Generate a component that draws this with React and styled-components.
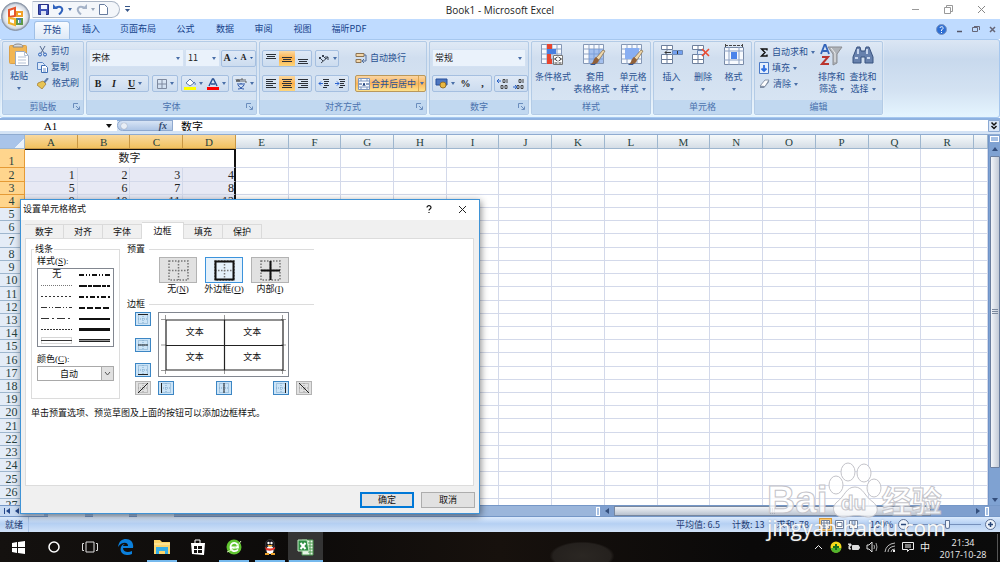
import React from 'react';
import styled, { createGlobalStyle, css } from 'styled-components';

const Global = createGlobalStyle`
  * { box-sizing: border-box; }
  body { margin: 0; overflow: hidden; font-family: "Noto Sans", "Noto Sans CJK SC", sans-serif; font-size: 9px; line-height: 12px; }
  button, input, select { font: inherit; color: inherit; margin: 0; padding: 0; border: 0; background: none; outline: none; }
  svg { display: block; flex: none; }
  fieldset { margin: 0; min-width: 0; }
`;
const cjk = '"Noto Sans CJK SC", sans-serif';
const song = '"Liberation Serif", "Noto Sans CJK SC", serif';

const Window = styled.div`position: relative; display: flex; flex-direction: column; height: 100vh; min-height: 480px; overflow: hidden; background: #fff;`;

/* title bar and ribbon tabs */
const TitleBar = styled.header`position: relative; display: grid; grid-template-columns: 1fr auto 1fr; align-items: center; height: 19px; background: #fff;`;
const TitleLeft = styled.div`display: flex; align-items: center; padding-left: 32px;`;
const QuickBar = styled.div`display: flex; align-items: center; gap: 4px; width: 88px; height: 17px; padding-left: 5px; border: 1px solid #a9b4c4; border-left-color: #dfe6ef; border-radius: 0 9px 9px 0; background: #f3f6fa;`;
const IconButton = styled.button`display: flex; align-items: center; justify-content: center;`;
const Title = styled.h1`margin: 0; font: 400 10px/14px "Open Sans", sans-serif; color: #222;`;
const WindowButtons = styled.div`display: flex; align-items: center; justify-content: flex-end; gap: 24px; padding-right: 14px;`;
const Orb = styled.button`position: absolute; left: 1px; top: 2px; z-index: 2; width: 29px; height: 29px;`;
const TabBar = styled.nav`display: flex; align-items: flex-end; height: 20px; padding-left: 34px; background: #bfdbff; font: 9px/16px ${cjk}; color: #15428b;`;
const Tab = styled.button`height: 18px; padding-bottom: 2px; width: ${p => p.$w}px; ${p => p.$on && css`border: 1px solid #9fbfe6; border-bottom: 0; border-radius: 3px 3px 0 0; background: linear-gradient(#f8fbff, #dde9f7);`}`;
const TabTools = styled.div`display: flex; align-items: center; gap: 9px; height: 20px; margin-left: auto; padding-right: 4px;`;

/* ribbon */
const Ribbon = styled.section`display: flex; gap: 2px; height: 79px; padding: 1px 2px 2px; border: 1px solid #a6c7ee; border-left: 0; border-radius: 3px; background: linear-gradient(#dbe6f4 0, #c8d9ed 25%, #d3e2f2 65%, #e5f5ff 100%); font-family: ${cjk}; color: #2a5292;`;
const GroupBox = styled.section`display: flex; flex-direction: column; width: ${p => p.$w}px; border: 1px solid #b3cbe6; border-radius: 2px; box-shadow: 0 0 0 1px #ffffff40; background: linear-gradient(#dfe9f5 0, #d0deef 22%, #d9e6f4 100%);`;
const GroupBody = styled.div`display: flex; flex: 1; min-height: 0; gap: ${p => p.$gap || 0}px; padding: ${p => p.$pad || '2px'};`;
const GroupTitle = styled.h2`display: flex; flex: none; align-items: center; justify-content: center; position: relative; height: 14px; margin: 0; font: 9px/14px ${cjk}; color: #4a72ae; background: #c1d8f0;`;
const Launcher = styled.button`position: absolute; right: 3px; top: 3px;`;
const Column = styled.div`display: flex; flex-direction: column; gap: ${p => p.$gap || 0}px;`;
const Row = styled.div`display: flex; align-items: center; gap: ${p => p.$gap || 0}px;`;
const BigButton = styled.button`display: flex; flex-direction: column; align-items: center; align-self: flex-start; width: ${p => p.$w}px; line-height: 12px; white-space: nowrap; > svg { margin-bottom: 3px; }`;
const Line = styled.span`display: flex; align-items: center; justify-content: center; gap: 3px; height: 12px;`;
const SmallButton = styled.button`display: flex; align-items: center; gap: 3px; height: 16px; white-space: nowrap;`;
const Strip = styled.div`display: flex; height: 17px; border: 1px solid #a5bfe0; border-radius: 2px; background: linear-gradient(#dfe9f6, #ccdcef); color: #222;`;
const Tool = styled.button`display: flex; align-items: center; justify-content: center; gap: 3px; width: ${p => p.$w || 16}px; font: 700 10px/14px "Liberation Serif", serif; ${p => p.$on && css`background: linear-gradient(#fcd9a0, #fbb04c 50%, #fdd57c);`}`;
const MergeButton = styled.button`display: flex; align-items: center; gap: 1px; width: 71px; height: 17px; padding-left: 2px; border: 1px solid #b9985c; border-radius: 2px; background: linear-gradient(#fbd5a2, #fbb65c 50%, #fde18a); white-space: nowrap; span { margin-left: auto; padding: 6px 1px; border-left: 1px solid #d9a552; }`;
const Divider = styled.i`width: 1px; height: 42px; background: #b5cbe5;`;
const Combo = styled.label`position: relative; width: ${p => p.$w}px; height: 18px; background: #eaf2fb; border: 1px solid #d3e1f2; select { width: 100%; height: 16px; padding-left: 2px; appearance: none; color: #222; font: 9px/16px ${cjk}; } svg { position: absolute; right: 3px; top: 7px; pointer-events: none; }`;

/* formula bar */
const FormulaBar = styled.div`display: flex; height: 17px; padding: 1px 0 3px; border-top: 1px solid #8db2e3; border-bottom: 1px solid #8fabd0; background: linear-gradient(#8fb1dd 2px, #d4e3f5 2px); font: 12px/12px ${song};`;
const NameBox = styled.label`position: relative; width: 117px; background: #fff; input { width: 100%; height: 12px; padding-right: 16px; text-align: center; font: 11px/12px ${song}; } svg { position: absolute; right: 5px; top: 4px; }`;
const FxButton = styled.button`display: flex; align-items: center; justify-content: space-between; width: 56px; padding: 0 5px 0 3px; border: 1px solid #8fa9cf; border-radius: 7px 0 0 7px; background: linear-gradient(#d7e4f5, #afc6e6); font: italic 700 10px/10px "Liberation Serif", serif; color: #334a70; i { width: 6px; height: 6px; border-radius: 50%; background: #e8eef6; box-shadow: 0 0 1px #778; }`;
const FormulaInput = styled.input`&& { flex: 1; min-width: 0; padding-left: 8px; background: #fff; font: 11px/12px ${cjk}; }`;

/* sheet */
const Sheet = styled.main`display: flex; flex: 1; min-height: 0;`;
const GridPane = styled.div`flex: 1; min-width: 0; overflow: hidden;`;
const Grid = styled.table`width: 100%; height: 102%; table-layout: fixed; border-collapse: separate; border-spacing: 0; font: 12px/12px ${song}; color: #222;`;
const Edge = styled.col`width: ${p => p.$w}px;`;
const ColHead = styled.th`height: 14px; padding: 0; border-right: 1px solid #9eb6ce; border-bottom: 1px solid #9eb6ce; font-weight: 400; font-size: 11px; line-height: 12px; color: #27413e; background: ${p => p.$on ? 'linear-gradient(#f9d99f, #f1c15f)' : 'linear-gradient(#f6fafb, #d5dde6)'}; ${p => p.$on && css`border-color: #c99844;`}`;
const Corner = styled.th`padding: 0; border-right: 1px solid #9eb6ce; border-bottom: 1px solid #9eb6ce; background: linear-gradient(135deg, transparent 75%, #e9f1fb 75%), #a9c4e9;`;
const RowHead = styled.th`height: ${p => p.$h}px; padding: 0 1px 0 0; vertical-align: bottom; border-right: 1px solid #9eb6ce; border-bottom: 1px solid #9eb6ce; font-weight: 400; line-height: 12px; color: #27413e; background: ${p => p.$on ? '#ffd58d' : '#e4ecf7'}; ${p => p.$on && css`border-color: #e59a35;`}`;
const Cell = styled.td`padding: 0 2px 0 0; border-right: 1px solid #d3d9ea; border-bottom: 1px solid #d3d9ea; text-align: right; vertical-align: bottom; ${p => p.$sel && css`background: #e7e9f4;`} ${p => p.$edge && css`border-right: 2px solid #111; padding-right: 0;`}`;
const Merged = styled.td`padding: 0; border-top: 1px solid #111; border-right: 2px solid #111; border-bottom: 1px solid #d3d9ea; text-align: center; vertical-align: top; font: 11px/15px ${cjk};`;
const VBar = styled.div`display: flex; flex-direction: column; align-items: center; gap: 5px; width: 12px; padding: 1px 0 3px; border-left: 1px solid #6f93c8; background: #7fa2d2;`;
const SplitV = styled.i`width: 9px; height: 6px; border: 1px solid #fff; background: #a5c0e4;`;
const VThumb = styled.div`display: flex; align-items: center; justify-content: center; width: 10px; flex: 1; margin-bottom: 25px; border: 1px solid #6b7f9f; border-radius: 1px; background: linear-gradient(90deg, #f3f6fa, #c2cad6);`;
const SheetBar = styled.div`display: flex; align-items: center; height: 12px; border-top: 1px solid #7597c7; border-bottom: 1px solid #7597c7; background: #9bb6db;`;
const NavButtons = styled.div`display: flex; align-items: center; gap: 5px; height: 10px; width: 44px; padding-left: 4px; background: #c7daf3;`;
const SheetTabs = styled.div`display: flex; flex: 1; gap: 8px; padding-left: 4px; font: 9px/12px "Liberation Sans", sans-serif; color: #333; button { background: #c9dbf1; padding: 0 4px; }`;
const HBar = styled.div`display: flex; align-items: center; gap: 5px; width: 40%; height: 10px; background: #7f9fce;`;
const SplitH = styled.i`width: 4px; height: 9px; border: 1px solid #fff; background: #a9c3e5;`;
const HThumb = styled.div`display: flex; align-items: center; justify-content: center; flex: 1; height: 10px; margin-right: 40px; border: 1px solid #77879f; background: linear-gradient(#f0f3f7, #b9c2cf);`;
const StatusBar = styled.footer`display: flex; align-items: center; height: 15px; padding: 0 4px 0 5px; background: linear-gradient(#dceafc, #b5d0f3 45%, #d1e2f8); font: 9px/15px ${cjk}; color: #1e3c73;`;
const Mode = styled.span`width: 24px; border-right: 1px solid #a7c3e8;`;
const Stats = styled.div`display: flex; gap: 12px; margin-left: auto; white-space: nowrap;`;
const Views = styled.div`display: flex; gap: 1px; margin-left: 10px;`;
const ViewButton = styled.button`&& { display: flex; align-items: center; justify-content: center; width: 13px; height: 13px; ${p => p.$on && css`background: #fbc86f; box-shadow: inset 0 0 0 1px #d79b3d;`} }`;
const Zoom = styled.div`display: flex; align-items: center; gap: 4px; margin-left: 10px; span { width: 24px; }`;
const ZoomSlider = styled.input`&& { appearance: none; width: 68px; height: 9px; background: linear-gradient(#7690bb, #7690bb) center / 100% 1px no-repeat; } &::-webkit-slider-thumb { appearance: none; width: 5px; height: 9px; border: 1px solid #5c7195; border-radius: 1px 1px 3px 3px; background: #eef3fa; }`;

/* taskbar */
const Taskbar = styled.footer`display: flex; height: 30px; background: radial-gradient(36px 16px at 582px 24px, #2b2723 0, #25211e 80%, transparent 90%), linear-gradient(90deg, #14110f, #0d0b0a 30%, #17110d 50%, #0a0909 75%, #0b0b0b); color: #eee;`;
const Task = styled.button`&& { display: flex; align-items: center; justify-content: center; width: ${p => p.$w || 36}px; height: 30px; ${p => p.$open && css`background: linear-gradient(#76b9ed, #76b9ed) center bottom / 30px 2px no-repeat;`} ${p => p.$on && css`background: linear-gradient(#76b9ed, #76b9ed) center bottom / 34px 2px no-repeat, #343434;`} }`;
const Tray = styled.div`display: flex; align-items: center; gap: 6px; margin-left: auto; padding-right: 2px; font: 10px/12px ${cjk};`;
const Clock = styled.time`width: 62px; padding: 3px 7px 0 0; text-align: center; white-space: nowrap; font: 9px/12px "Open Sans", sans-serif; border-right: 1px solid #555;`;

/* dialog */
const Dialog = styled.section`position: absolute; left: 20px; top: 199px; z-index: 3; width: 460px; height: 315px; display: flex; flex-direction: column; border: 1px solid #3f93d6; background: #f0f0f0; box-shadow: 1px 2px 7px #0007; font: 9px/12px "Liberation Serif", ${cjk}; color: #111;`;
const DialogTitle = styled.header`display: flex; align-items: center; height: 20px; padding: 0 12px 2px 2px; background: #fff; font-family: ${cjk}; h2 { flex: 1; margin: 0; font: inherit; } button + button { margin-left: 25px; }`;
const DialogTabs = styled.div`display: flex; align-items: flex-end; height: 17px; margin-top: 1px; padding-left: 4px;`;
const DialogTab = styled.button`position: relative; width: 39px; height: 14px; border: 1px solid #dadada; border-left: 0; border-bottom: 0; background: #f0f0f0; ${p => p.$on && css`z-index: 1; width: 42px; height: 17px; margin-bottom: -1px; background: #fff;`}`;
const Panel = styled.div`flex: 1; margin: 0 5px 0 4px; padding: 4px 5px; border: 1px solid #dcdcdc; background: #fff;`;
const Columns = styled.div`display: flex; gap: 7px;`;
const LineBox = styled.fieldset`display: flex; flex-direction: column; width: 89px; height: 156px; padding: 0 5px; border: 1px solid #dcdcdc; legend { padding: 0 1px; margin-left: -3px; line-height: 12px; }`;
const StyleList = styled.div`display: grid; grid-template-columns: 1fr 1fr; grid-auto-rows: 11px; height: 79px; margin: 1px 0 6px; border: 1px solid #828790; button { display: flex; align-items: center; justify-content: center; height: 11px; line-height: 11px; }`;
const ColorSelect = styled.label`position: relative; display: block; margin-top: 1px; select { width: 77px; height: 15px; border: 1px solid #a9a9a9; appearance: none; padding-left: 22px; font: 9px/13px ${cjk}; } svg { position: absolute; right: 0; top: 0; pointer-events: none; }`;
const Right = styled.div`width: 187px;`;
const Heading = styled.h3`display: flex; align-items: center; gap: 4px; margin: 0; font: inherit; line-height: 12px; &::after { content: ''; flex: 1; height: 1px; background: #dcdcdc; }`;
const Presets = styled.div`display: flex; gap: 8px; padding: 2px 0 0 32px; margin-bottom: 2px;`;
const Preset = styled.div`display: flex; flex-direction: column; align-items: center; width: 38px; white-space: nowrap; button { display: flex; align-items: center; justify-content: center; width: 38px; height: 26px; border: 1px solid ${p => p.$on ? '#3c93dc' : '#b3b3b3'}; background: ${p => p.$on ? '#e5f1fb' : '#e1e1e1'}; } label { line-height: 13px; }`;
const BorderGrid = styled.div`display: grid; grid-template-columns: 16px 131px 16px; gap: 4px 7px; padding: 2px 0 0 8px;`;
const Side = styled.div`display: flex; flex-direction: ${p => p.$col ? 'column' : 'row'}; justify-content: space-between;`;
const EdgeButton = styled.button`&& { display: flex; align-items: center; justify-content: center; width: 16px; height: 14px; border: 1px solid ${p => p.$off ? '#b3b3b3' : '#3c86c4'}; background: ${p => p.$off ? '#e1e1e1' : '#cce4f7'}; }`;
const Preview = styled.div`position: relative; height: 65px; border: 1px solid #828790;`;
const PreviewText = styled.div`position: absolute; inset: 7px 7px; display: grid; grid-template: 1fr 1fr / 1fr 1fr; place-items: center;`;
const Hint = styled.p`margin: 8px 0 0; font-size: 9px; line-height: 12px;`;
const DialogButtons = styled.div`display: flex; justify-content: flex-end; gap: 7px; padding: 6px 4px 5px;`;
const PushButton = styled.button`&& { width: 54px; height: 16px; line-height: 12px; background: #e1e1e1; border: ${p => p.$main ? '2px solid #0078d7' : '1px solid #adadad'}; }`;

/* watermark */
const Watermark = styled.div`position: absolute; right: 54px; bottom: 22px; z-index: 4; width: 179px; pointer-events: none; color: #ffffffd0;`;
const Brand = styled.div`display: flex; align-items: flex-end; font: 700 39px/39px "Liberation Sans", sans-serif; -webkit-text-stroke: 1px #c3c3c9; span { white-space: nowrap; } span:last-child { font: 700 30px/40px ${cjk}; }`;
const Paw = styled.div`position: relative; width: 54px; height: 58px; b { position: absolute; left: 13px; bottom: 5px; font: 700 21px/22px "Liberation Sans", sans-serif; }`;
const Site = styled.div`font: 21px/24px "Open Sans", sans-serif; margin-top: -3px; white-space: nowrap; color: #fffffff0; text-shadow: 0 0 2px #8889;`;

/* drawings */
const Svg = ({ w = 12, h = w, vb, children, ...r }) => <svg width={w} height={h} viewBox={vb || `0 0 ${w} ${h}`} fill="none" aria-hidden="true" {...r}>{children}</svg>;
const Caret = ({ c = '#4a6fa8' }) => <Svg w={4} h={3}><path d="M0 0h4L2 3z" fill={c} /></Svg>;
const Lines = ({ v, a }) => {
  const x = i => a === 'l' ? 1 : a === 'r' ? (i % 2 ? 4 : 1) : (i % 2 ? 2 : 1);
  const n = v ? 3 : 5, y0 = v === 't' ? 1 : v === 'b' ? 6 : v ? 4 : 1;
  return <Svg w={12}>{Array.from({ length: n }, (_, i) => <path key={i} d={`M${x(i)} ${y0 + i * 2 + .5}h${i % 2 ? (a === 'c' || v ? 8 : 7) : 10}`} stroke="#2b3038" />)}</Svg>;
};
const Indent = ({ out }) => <Svg w={12}><path d="M5 1.5h6M6 3.5h5M6 5.5h4M6 7.5h5M5 9.5h4" stroke="#2b3038" /><path d={out ? 'M5 5.5H1m2-2-2 2 2 2' : 'M1 5.5h4m-2-2 2 2-2 2'} stroke="#2a62cf" /></Svg>;
const Launch = () => <Launcher aria-label="对话框启动器"><Svg w={7}><path d="M.5 5V.5H5M3 3l3 3M6.5 3.5v3h-3" stroke="#6a8dbd" /></Svg></Launcher>;
const MiniSheet = () => <><path d="M.5.5h20v19H.5z" fill="#f7fafe" stroke="#8497b5" /><path d="M.5 5h20M.5 10h20M.5 15h20M6 0v20M11 0v20M16 0v20" stroke="#8fa3c4" /></>;
const Brush = () => <><path d="m20 6 2 1-6 9-3-2z" fill="#f0d8ac" stroke="#846a45" strokeWidth=".7" /><path d="m13 13 3 3c-1 4-4 5-8 4 3-2 2-5 5-7z" fill="#916038" /><path d="M8 20c2 0 4 0 5-1l-1 2H7z" fill="#31589a" /></>;
const CondIcon = () => <Svg w={24}><MiniSheet /><path d="M6 0h5v5H6zM6 15h5v5H6zM6 10h4v5H6z" fill="#e8452f" /><path d="M6 5h9v5H6z" fill="#487ee0" /><path d="M12.5 11.5h9v9h-9z" fill="#fff" stroke="#777" /><path d="m16.500 13-3 2 3 2m-3 2h3m1-6 3 2-3 2m0 2h3" stroke="#222" strokeWidth=".9" /></Svg>;
const TableIcon = ({ cell }) => <Svg w={24}><MiniSheet />{cell ? <path d="M4 4h14v11H4z" fill="#88aef2" /> : <path d="M6 5h14v14H6z" fill="#6d99e2" opacity=".6" />}<Brush /></Svg>;
const CellsIcon = ({ kind }) => <Svg w={24}>{kind === 'fmt' ? <><path d="M2.500 3.500h19v17h-19z" fill="#f7fafe" stroke="#788aa7" /><path d="M2 7h20M2 16h20M7 3v18M17 3v18" stroke="#8fa3c4" /><path d="M9 8h6v7H9z" fill="#4c84ea" /><path d="M3 1.500h18M3.500 0v3M20.500 0v3" stroke="#444" strokeDasharray="3 1" /></> : <><path d="M1.500 1.500h11v4h-11zM1.500 10.500h11v5h-11zM1.500 15.500h11v4h-11zM7 1v5M7 11v9" fill="#fff" stroke="#6d7f9c" /><path d={kind === 'ins' ? 'M12.500 6.500h10v4h-10z' : 'M6.500 6.500h7v4h-7z'} fill={kind === 'ins' ? '#73a0ef' : '#dfe8f8'} stroke="#6d8ab8" />{kind === 'ins' ? <path d="M5 8.500h6M7 6.500l-2 2 2 2M17.500 7v3" stroke="#333" /> : <path d="m11 5 7 7m0-7-7 7" stroke="#ed4b30" strokeWidth="1.600" />}</>}</Svg>;
const PasteIcon = () => <Svg w={22} h={24}><rect x="1.500" y="2.500" width="17" height="18" rx="1" fill="#f2b653" stroke="#dba14a" /><path d="M5 4c0-2 2-3 5-3s5 1 5 3z" fill="#d9dbe0" stroke="#888" /><path d="M7.500 8.500h9l4 4v10h-13z" fill="#fff" stroke="#9aa9c0" /><path d="M16.500 8.500v4h4M10 14h8M10 17h8M10 20h8" stroke="#b3c0d4" /></Svg>;
const SortIcon = () => <Svg w={24}><path d="M1 10 4.500 1h1L9 10M3 7h4" stroke="#3264ba" strokeWidth="1.800" /><path d="M2 13h6l-6 7h7" stroke="#ba352f" strokeWidth="2" /><path d="M8 3h14l-5 7v9l-4 2V10z" fill="#aeb3b9" stroke="#8b8d91" /><path d="m11 4 4 5v9" stroke="#eee" /></Svg>;
const FindIcon = () => <Svg w={24}><path d="M6 3h3l1 4h4l1-4h3l4 10v6h-8v-6h-4v6H2v-6z" fill="#6781ad" stroke="#39527f" /><path d="M4 14h3M16 14h3M7 5v5M16 5v5" stroke="#c8d6ed" strokeWidth="2" /></Svg>;
const Glyph = {
  cut: <Svg w={11}><path d="m3 0 4 7m1-7L4 7" stroke="#566b90" /><circle cx="3" cy="8.500" r="1.500" stroke="#2d62b8" /><circle cx="8" cy="8.500" r="1.500" stroke="#2d62b8" /></Svg>,
  copy: <Svg w={11}><path d="M.5.5h5l2 2v5h-7z" fill="#dce9fa" stroke="#5c86c3" /><path d="M4.500 3.500h4l2 2v5h-6z" fill="#fff" stroke="#3e6eb4" /><path d="M6 7h3M6 9h3" stroke="#6c94cf" /></Svg>,
  brush: <Svg w={12} h={11}><path d="m11 0-5 6" stroke="#617da8" strokeWidth="2" /><path d="M1 5 6 3l3 3-4 5-5-4z" fill="#e7c454" stroke="#9b742c" strokeWidth=".7" /></Svg>,
  sum: <Svg w={10} h={11}><path d="M8 3.500V2H2.500L6 5.500 2.500 9H8V7.500" stroke="#111" strokeWidth="1.400" /></Svg>,
  fill: <Svg w={10} h={12}><path d="M.5.5h9v11h-9z" fill="#e5effd" stroke="#4b79c5" /><path d="M5 3v6M2.500 6.500 5 9l2.500-2.500" stroke="#2e6ee0" strokeWidth="1.800" /></Svg>,
  erase: <Svg w={11} h={10}><path d="m1 7 5-6h4L6 7.500z" fill="#fff" stroke="#8a96a8" /><path d="M1 7v2h4l5-6V1L6 7.500z" fill="#7f8ea5" /></Svg>,
  save: <Svg w={11}><path d="M.5.5h10v10H.5z" fill="#3e52b6" stroke="#252f86" /><path d="M3 1h6v4H3z" fill="#f2f6ff" /><path d="M3 7h5v4H3z" fill="#dbe1f4" /></Svg>,
};
const Undo = () => <Svg w={11}><path d="M3 3.500c5-2 8 1 5 5l-2 2" stroke="#3163bd" strokeWidth="2" /><path d="M0 4V0l5 5H0z" fill="#3163bd" /></Svg>;
const Redo = () => <Svg w={11}><path d="M8 3.500c-5-2-8 1-5 5l2 2" stroke="#a5b3c8" strokeWidth="2" /><path d="M11 4V0L6 5h5z" fill="#a5b3c8" /></Svg>;
const edgeLine = { t: 'M0 .5h10', m: 'M0 5h10', b: 'M0 9.500h10', l: 'M.5 0v10', c: 'M5 0v10', r: 'M9.500 0v10', u: 'm0 10 10-10', d: 'm0 0 10 10' };
const Mini = ({ kind }) => <Svg w={10}><path d="M.5.5h9v9h-9zM5 0v10M0 5h10" stroke={kind === 'u' || kind === 'd' ? '#999' : '#7ba6c9'} strokeDasharray="1 1" /><path d={edgeLine[kind]} stroke="#222" /></Svg>;
const PresetIcon = ({ kind }) => <Svg w={21}><path d="M1 1h19v19H1zM10.500 1v19M1 10.500h19" stroke="#777" strokeWidth="1.500" strokeDasharray="1.500 1.500" />{kind === 'out' && <path d="M1.500 1.500h18v18h-18z" stroke="#111" strokeWidth="2" />}{kind === 'in' && <path d="M10.500 1v19M1 10.500h19" stroke="#111" strokeWidth="2" />}</Svg>;
const dashes = [[null, '5 2 1 2 1 2', 2], ['1 1', '8 1 4 1', 2], ['2 2', '5 2 2 2', 2], ['6 2 1 2 1 2', '6 2', 2], ['8 3 2 3', '', 2], ['2 1', '', 3], ['', 'double', 3]];

const Group = ({ w, title, gap, pad, launch, children }) => <GroupBox $w={w}><GroupBody $gap={gap} $pad={pad}>{children}</GroupBody><GroupTitle>{title}{launch && <Launch />}</GroupTitle></GroupBox>;
const Big = ({ w, icon, a, b }) => <BigButton $w={w}>{icon}<Line>{a}</Line><Line>{b}<Caret /></Line></BigButton>;
const Select = ({ w, label, value }) => <Combo $w={w}><select aria-label={label}><option>{value}</option></select><Caret /></Combo>;

const cols = 'ABCDEFGHIJKLMNOPQR'.split('');
const rows = Array.from({ length: 26 }, (_, i) => i + 2);

export default function App() {
  return <Window>
    <Global />
    <TitleBar>
      <Orb aria-label="Office 按钮"><Svg w={29}><defs><radialGradient id="orb"><stop offset=".5" stopColor="#fff" /><stop offset=".85" stopColor="#d5dbe4" /><stop offset="1" stopColor="#8792a4" /></radialGradient></defs><circle cx="14.500" cy="14.500" r="14" fill="url(#orb)" stroke="#8c97a8" /><path d="m8 8 6-2v8l-6 1z" stroke="#e6552b" strokeWidth="2" /><path d="M16 10h5v4h-5z" stroke="#f1a028" strokeWidth="2" /><path d="m8 16 6 1v6l-6-2z" stroke="#f0b02c" strokeWidth="2" /><path d="M16 17h5v5h-5z" stroke="#5f9a4a" strokeWidth="2" /><path d="M16 17h3v4" stroke="#3c76cd" strokeWidth="1.500" /></Svg></Orb>
      <TitleLeft>
        <QuickBar><IconButton aria-label="保存">{Glyph.save}</IconButton><IconButton aria-label="撤消"><Undo /></IconButton><Caret /><IconButton aria-label="恢复"><Redo /></IconButton><Caret c="#98a6ba" /><IconButton aria-label="新建"><Svg w={9} h={11}><path d="M.5.5h5l3 3v7h-8z" fill="#fff" stroke="#677c9f" /></Svg></IconButton></QuickBar>
        <IconButton aria-label="自定义"><Svg w={16} h={7}><path d="M5 .5h5" stroke="#345487" /><path d="M5 3h5L7.500 6z" fill="#345487" /></Svg></IconButton>
      </TitleLeft>
      <Title>Book1 - Microsoft Excel</Title>
      <WindowButtons><IconButton aria-label="最小化"><Svg w={9}><path d="M1 4.500h7" stroke="#999" /></Svg></IconButton><IconButton aria-label="还原"><Svg w={9}><path d="M.5 2.500h6v6h-6zM2.500 2V.5h6v6H7" stroke="#999" /></Svg></IconButton><IconButton aria-label="关闭"><Svg w={9}><path d="m1 1 7 7m0-7L1 8" stroke="#888" /></Svg></IconButton></WindowButtons>
    </TitleBar>
    <TabBar>
      <Tab $on $w={36}>开始</Tab><Tab $w={42}>插入</Tab><Tab $w={52}>页面布局</Tab><Tab $w={43}>公式</Tab><Tab $w={36}>数据</Tab><Tab $w={41}>审阅</Tab><Tab $w={37}>视图</Tab><Tab $w={56}>福昕PDF</Tab>
      <TabTools><IconButton aria-label="帮助"><Svg w={11}><circle cx="5.500" cy="5.500" r="5" fill="#2e6fd4" stroke="#7b95c0" /><path d="M4 4c0-2 4-1.500 3 .5L5.500 6v1M5.500 8v1" stroke="#fff" /></Svg></IconButton><IconButton aria-label="最小化窗口"><Svg w={7}><path d="M1 5.500h5" stroke="#556" strokeWidth="1.500" /></Svg></IconButton><IconButton aria-label="还原窗口"><Svg w={8}><path d="M.5 2.500h5v4h-5zM2 1.500h5.500V5" stroke="#667" /></Svg></IconButton><IconButton aria-label="关闭窗口"><Svg w={7}><path d="m1 1 5 5m0-5L1 6" stroke="#667" strokeWidth="1.500" /></Svg></IconButton></TabTools>
    </TabBar>
    <Ribbon>
      <Group w={82} title="剪贴板" launch gap={6} pad="1px 4px">
        <Big w={26} icon={<PasteIcon />} a="粘贴" />
        <Column>{[['cut', '剪切'], ['copy', '复制'], ['brush', '格式刷']].map(([i, t]) => <SmallButton key={i}>{Glyph[i]}{t}</SmallButton>)}</Column>
      </Group>
      <Group w={171} title="字体" launch pad="7px 2px 0">
        <Column $gap={8}>
          <Row $gap={1}><Select w={95} label="字体" value="宋体" /><Select w={35} label="字号" value="11" /><Strip><Tool>A<Svg w={3}><path d="m0 2 1.500-2L3 2z" fill="#25569f" /></Svg></Tool><Tool $w={17}><small>A</small><Svg w={3}><path d="m0 0 1.500 2L3 0z" fill="#25569f" /></Svg></Tool></Strip></Row>
          <Row $gap={3}><Strip><Tool>B</Tool><Tool><i>I</i></Tool><Tool $w={26}><u>U</u><Caret /></Tool></Strip><Strip><Tool $w={24}><Svg w={10}><path d="M.5.500h9v9h-9zM5 0v10M0 5h10" stroke="#7e8aa0" /></Svg><Caret /></Tool></Strip><Strip><Tool $w={23}><Svg w={12}><path d="m2 5 4-4 4 4-4 3z" fill="#fff" stroke="#607da9" /><path d="M10 4c2 1 1 3 1 3" stroke="#4f76b7" /><path d="M0 9h12v3H0z" fill="#ff0" /></Svg><Caret /></Tool><Tool $w={23}><Svg w={12}><path d="m2 8 3.500-7h1L10 8M4 6h4" stroke="#2b5293" strokeWidth="1.500" /><path d="M0 9h12v3H0z" fill="#f00" /></Svg><Caret /></Tool></Strip><Strip><Tool $w={23}><Svg w={12}><path d="M1 1l1 3 1-3 1 3 1-3M6 4V1h2v3M10 1v3h2" stroke="#444" strokeWidth=".8" /><path d="M2 6h8M6 5v1M3 7c2 3 4 4 6 4M9 7c-2 3-4 4-6 4" stroke="#2852a6" /></Svg><Caret /></Tool></Strip></Row>
        </Column>
      </Group>
      <Group w={168} title="对齐方式" launch gap={3} pad="8px 1px 0 2px">
        <Column $gap={8}>
          <Row $gap={3}><Strip><Tool><Lines v="t" /></Tool><Tool $on><Lines v="m" /></Tool><Tool><Lines v="b" /></Tool></Strip><Strip><Tool $w={22}><Svg w={12}><path d="m3 10 7-6m0 3V4H7M1 4l4 4M4 2l4 4M1 6l2-2m1 0 2-2" stroke="#3b4350" /></Svg><Caret /></Tool></Strip></Row>
          <Row $gap={3}><Strip><Tool><Lines a="l" /></Tool><Tool $on><Lines a="c" /></Tool><Tool><Lines a="r" /></Tool></Strip><Strip><Tool><Indent out /></Tool><Tool><Indent /></Tool></Strip></Row>
        </Column>
        <Divider />
        <Column $gap={9}><SmallButton><Svg w={12}><path d="M1 1.500h8v3H1zM1 7.500h5v3H1z" fill="#f3d7aa" stroke="#8c7352" /><path d="M9 3h2v6H7m2-2L7 9l2 2" stroke="#526f9d" /></Svg>自动换行</SmallButton>
          <MergeButton><Svg w={12}><path d="M.5.5h11v11H.5zM0 3h12M0 9h12M3 0v3M9 0v3M3 9v3M9 9v3" fill="#f8fbff" stroke="#7f97bf" /><path d="M1 6h3M8 6h3M5 8l1-3 1 3" stroke="#224480" /></Svg>合并后居中<span><Caret /></span></MergeButton></Column>
      </Group>
      <Group w={100} title="数字" launch pad="7px 2px 0">
        <Column $gap={8}><Select w={94} label="数字格式" value="常规" />
          <Row $gap={2}><Strip><Tool $w={24}><Svg w={13}><path d="M1 2h11v6H1z" fill="#4d76bf" stroke="#274f9b" /><ellipse cx="8" cy="8" rx="3" ry="3" fill="#e9b740" stroke="#96712a" /></Svg><Caret /></Tool><Tool $w={17}>%</Tool><Tool $w={17}>,</Tool></Strip><Strip>{[0, 1].map(i => <Tool key={i}><Svg w={12}><path d="M6 1.500h2v3H6zM10 1v4M4 7.500h2v3H4zM8 7.500h2v3H8z" stroke="#444" /><path d={i ? 'M0 9h4M2 7l2 2-2 2' : 'M4 3H0m2-2L0 3l2 2'} stroke="#2960c4" /></Svg></Tool>)}</Strip></Row></Column>
      </Group>
      <Group w={120} title="样式" pad="2px 1px"><Big w={40} icon={<CondIcon />} a="条件格式" /><Big w={44} icon={<TableIcon />} a="套用" b="表格格式" /><Big w={32} icon={<TableIcon cell />} a="单元格" b="样式" /></Group>
      <Group w={99} title="单元格" pad="2px 1px"><Big w={33} icon={<CellsIcon kind="ins" />} a="插入" /><Big w={30} icon={<CellsIcon kind="del" />} a="删除" /><Big w={31} icon={<CellsIcon kind="fmt" />} a="格式" /></Group>
      <Group w={129} title="编辑" gap={1} pad="2px 4px">
        <Column>{[['sum', '自动求和'], ['fill', '填充'], ['erase', '清除']].map(([i, t]) => <SmallButton key={i}>{Glyph[i]}{t}<Caret /></SmallButton>)}</Column>
        <Big w={31} icon={<SortIcon />} a="排序和" b="筛选" /><Big w={30} icon={<FindIcon />} a="查找和" b="选择" />
      </Group>
    </Ribbon>
    <FormulaBar>
      <NameBox><input aria-label="名称框" defaultValue="A1" /><Svg w={6} h={4}><path d="M0 0h6L3 4z" fill="#111" /></Svg></NameBox>
      <FxButton aria-label="插入函数"><i />fx</FxButton><FormulaInput aria-label="编辑栏" defaultValue="数字" />
      <IconButton aria-label="展开编辑栏"><Svg w={12}><path d="M.5.5h11v11H.500z" fill="#d9e6f7" stroke="#8ba9d3" /><path d="m3.500 2.500 2.500 2.500 2.500-2.500M3.500 6l2.500 2.500L8.500 6" stroke="#111" strokeWidth="1.500" /></Svg></IconButton>
    </FormulaBar>
    <Sheet>
      <GridPane><Grid>
        <colgroup><Edge $w={25} />{cols.map(c => <col key={c} />)}<Edge $w={14} /></colgroup>
        <thead><tr><Corner />{cols.map((c, i) => <ColHead key={c} $on={i < 4}>{c}</ColHead>)}<ColHead /></tr></thead>
        <tbody>
          <tr><RowHead $h={19} $on>1</RowHead><Merged colSpan={4}>数字</Merged>{cols.slice(4).map(c => <Cell key={c} />)}<Cell /></tr>
          {rows.map(r => <tr key={r}><RowHead $h={13} $on={r < 5}>{r}</RowHead>{cols.map((c, i) => <Cell key={c} $sel={r < 5 && i < 4} $edge={r < 5 && i === 3}>{r < 5 && i < 4 ? (r - 2) * 4 + i + 1 : null}</Cell>)}<Cell /></tr>)}
        </tbody>
      </Grid></GridPane>
      <VBar><SplitV /><Svg w={6} h={4}><path d="m0 4 3-4 3 4z" fill="#334e7c" /></Svg><VThumb><Svg w={6}><path d="M0 .5h6M0 2.500h6M0 4.500h6" stroke="#7b899e" /></Svg></VThumb><Svg w={6} h={4}><path d="m0 0 3 4 3-4z" fill="#334e7c" /></Svg></VBar>
    </Sheet>
    <SheetBar>
      <NavButtons><Svg w={6}><path d="M.5 0v6" stroke="#24478a" /><path d="M6 0v6L2 3z" fill="#24478a" /></Svg><Svg w={4} h={6}><path d="M4 0v6L0 3z" fill="#24478a" /></Svg></NavButtons>
      <SheetTabs><button>Sheet1</button><button>Sheet2</button><button>Sheet3</button></SheetTabs>
      <SplitH /><HBar><Svg w={9} h={6}><path d="M9 0v6L5 3z" fill="#334e7c" /></Svg><HThumb><Svg w={6}><path d="M.5 0v6M2.500 0v6M4.500 0v6" stroke="#7b899e" /></Svg></HThumb><Svg w={4} h={6}><path d="M0 0v6l4-3z" fill="#334e7c" /></Svg><SplitH /><Svg w={6} /></HBar>
    </SheetBar>
    <StatusBar><Mode>就绪</Mode><Stats><span>平均值: 6.5</span><span>计数: 13</span><span>求和: 78</span></Stats>
      <Views>{['普通', '页面布局', '分页预览'].map((v, i) => <ViewButton key={v} aria-label={v} $on={i === 0}><Svg w={9}><path d={i === 1 ? 'M.5.5h8v8h-8zM2 2.500h5v4H2z' : i ? 'M.5.5h8v8h-8zM3 0v5h3V0' : 'M.5.5h8v8h-8zM0 3h9M0 6h9M3 0v9M6 0v9'} stroke="#71809a" fill="#fff" /></Svg></ViewButton>)}</Views>
      <Zoom><span>100%</span><IconButton aria-label="缩小"><Svg w={11}><circle cx="5.500" cy="5.500" r="5" fill="#edf3fb" stroke="#5c7195" /><path d="M3 5.500h5" stroke="#294779" strokeWidth="1.500" /></Svg></IconButton><ZoomSlider type="range" aria-label="显示比例" min="0" max="100" defaultValue="50" /><IconButton aria-label="放大"><Svg w={11}><circle cx="5.500" cy="5.500" r="5" fill="#edf3fb" stroke="#5c7195" /><path d="M3 5.500h5M5.500 3v5" stroke="#294779" strokeWidth="1.500" /></Svg></IconButton></Zoom>
    </StatusBar>
    <Taskbar>
      <Task aria-label="开始菜单"><Svg w={13}><path d="m0 2 5-1v5H0zM6 1l7-1v6H6zM0 7h5v5l-5-1zM6 7h7v6l-7-1z" fill="#fff" /></Svg></Task>
      <Task aria-label="Cortana"><Svg w={12}><circle cx="6" cy="6" r="5" stroke="#fff" strokeWidth="1.500" /></Svg></Task>
      <Task aria-label="任务视图"><Svg w={16} h={12}><path d="M4 1h8v10H4zM2 2.500H.5v7H2M14 2.500h1.500v7H14" stroke="#ddd" /></Svg></Task>
      <Task aria-label="Edge"><Svg w={16}><path d="M0 8C1 2 4 0 8 0c5 0 8 4 7 9H5c0 4 5 5 9 3v3C7 18 1 14 3 8c1-2 2-3 4-3-1 1-2 1-2 2h5c0-5-7-4-10 1z" fill="#0b80dd" /></Svg></Task>
      <Task $open aria-label="资源管理器"><Svg w={16} h={15}><path d="M0 0h6l2 2h8v12H0z" fill="#fbd56b" /><path d="M2 7h12v7h-3v-3H5v3H2z" fill="#34aee8" /><path d="M0 4h16" stroke="#fff0b5" /></Svg></Task>
      <Task aria-label="应用商店"><Svg w={16} h={17}><path d="M1 4h14l-1 12-12-1z" fill="#fff" /><path d="M5 4V1h5v3" stroke="#fff" /><path d="M4 7h3v3H4zM8 7h4v3H8zM4 11h3v3H4zM8 11h4v3H8z" fill="#151311" /></Svg></Task>
      <Task $open aria-label="浏览器"><Svg w={16}><circle cx="8" cy="8" r="7.500" fill="#61c431" /><path d="M4.500 8.500H12c.5-6-7.500-6-7.500-.5 0 5 5.500 5 7.500 2.500" stroke="#fff" strokeWidth="1.800" /><path d="M1 13C7 11 12 7 15 2" stroke="#d6f4b8" /></Svg></Task>
      <Task $open aria-label="QQ"><Svg w={14} h={16}><ellipse cx="7" cy="9" rx="5.500" ry="6" fill="#222" /><circle cx="7" cy="5" r="4.500" fill="#15151c" stroke="#555" strokeWidth=".5" /><ellipse cx="7" cy="11" rx="3.500" ry="4" fill="#fff" /><circle cx="5.500" cy="4" r="1.200" fill="#fff" /><circle cx="8.500" cy="4" r="1.200" fill="#fff" /><path d="M4 6h6l-3 2z" fill="#f6aa25" /><path d="M2 8q5 3 10 0v2q-4 3-9 1z" fill="#e5332a" /><path d="M2 14h4v2H2zM8 14h4v2H8z" fill="#efa42c" /></Svg></Task>
      <Task $on $w={35} aria-label="Excel"><Svg w={17}><path d="M5 1h11v15H5z" fill="#e8f4e7" stroke="#4c9b51" /><path d="M11 4h5M11 7h5M11 10h5M11 13h5M13 1v15" stroke="#4c9b51" /><path d="M1 1h9l2 11H1z" fill="#2f8e43" stroke="#c5e7c5" /><path d="m3.500 4 5 6m0-6-5 6" stroke="#fff" strokeWidth="2" /></Svg></Task>
      <Tray>
        <Svg w={11}><path d="m2 7 3.500-3.500L9 7" stroke="#eee" /></Svg><Svg w={12}><circle cx="6" cy="6" r="5.500" fill="#f4d91a" /><path d="M1 7a5 5 0 0 0 10 0" fill="#51b52d" /><path d="M6 3v6M3 6h6" stroke="#176d1d" strokeWidth="2" /></Svg><Svg w={12} h={9}><path d="M4.500 2.500h6v4h-6zM11 4h1v2M0 1h3v2H1v3h2" fill="#ddd" stroke="#ddd" /></Svg><Svg w={12}><path d="M1 4h2l3-3v10L3 8H1z" stroke="#ddd" /><path d="M8 4q1 2 0 4M10 2q2 4 0 8" stroke="#aaa" /></Svg><Svg w={12}><path d="M1 11Q2 3 11 2M4 11q0-5 7-6M7 11q0-3 4-3" stroke="#bbb" /><path d="M9 9h2v2H9z" fill="#eee" /></Svg><Svg w={12}><path d="M.5 1.500h11v7h-4l-2 2v-2h-5zM3 4h6M3 6h6" stroke="#eee" /></Svg><span>中</span><Clock>21:34<br />2017-10-28</Clock>
      </Tray>
    </Taskbar>
    <Dialog role="dialog" aria-label="设置单元格格式">
      <DialogTitle><h2>设置单元格格式</h2><IconButton aria-label="帮助"><Svg w={8}><path d="M2 2.500C2 0 6 0 6 2.500 6 4 4 4 4 5.500M4 7v1" stroke="#111" strokeWidth="1.200" /></Svg></IconButton><IconButton aria-label="关闭"><Svg w={9}><path d="m1 1 7 7m0-7L1 8" stroke="#222" /></Svg></IconButton></DialogTitle>
      <DialogTabs role="tablist">{['数字', '对齐', '字体', '边框', '填充', '保护'].map((t, i) => <DialogTab key={t} role="tab" aria-selected={i === 3} $on={i === 3}>{t}</DialogTab>)}</DialogTabs>
      <Panel>
        <Columns>
          <LineBox><legend>线条</legend><span>样式(<u>S</u>):</span>
            <StyleList>{dashes.map(([l, r, w], i) => <React.Fragment key={i}><button aria-label={`线型 ${i + 1}`}>{l === null ? '无' : <Svg w={31} h={7}>{i === 6 && <path d="M.5.5h30v6H.5z" stroke="#aaa" strokeDasharray="1 1" />}<path d="M0 3.500h31" stroke={i === 1 ? '#777' : '#333'} strokeDasharray={l} /></Svg>}</button><button aria-label={`线型 ${i + 8}`}><Svg w={31} h={5}>{r === 'double' ? <><path d="M0 2.500h31" stroke="#999" /><path d="M0 1.500h31M0 3.500h31" stroke="#222" /></> : <path d={w === 2 ? 'M0 3h31' : 'M0 2.500h31'} stroke="#111" strokeWidth={w} strokeDasharray={r} />}</Svg></button></React.Fragment>)}</StyleList>
            <label htmlFor="color">颜色(<u>C</u>):</label><ColorSelect as="div"><select id="color"><option>自动</option></select><Svg w={13} h={15}><path d="M.5.5h12v14H.5z" fill="#e1e1e1" stroke="#a9a9a9" /><path d="m4 6 2.500 3L9 6" stroke="#555" /></Svg></ColorSelect>
          </LineBox>
          <Right>
            <Heading>预置</Heading>
            <Presets>{[['无', 'N', 'none'], ['外边框', 'O', 'out'], ['内部', 'I', 'in']].map(([t, k, i]) => <Preset key={i} $on={i === 'out'}><button id={`preset-${i}`}><PresetIcon kind={i} /></button><label htmlFor={`preset-${i}`}>{t}(<u>{k}</u>)</label></Preset>)}</Presets>
            <Heading>边框</Heading>
            <BorderGrid>
              <Side $col>{['t', 'm', 'b'].map(k => <EdgeButton key={k} aria-label={`边框 ${k}`}><Mini kind={k} /></EdgeButton>)}</Side>
              <Preview><Svg w={129} h={63}><path d="M2 6.500h5M6.500 2v5M122 6.500h5M123.500 2v5M2 57.500h5M6.500 57v4M122 57.500h5M123.500 57v4M65.500 2v5M65.500 57v4M2 32h5M122 32h5" stroke="#999" /><path d="M7 7h117v50H7zM65.500 7v50M7 32.500h117" stroke="#222" strokeWidth="1.200" /></Svg><PreviewText><span>文本</span><span>文本</span><span>文本</span><span>文本</span></PreviewText></Preview><i />
              <EdgeButton $off aria-label="斜线"><Mini kind="u" /></EdgeButton><Side>{['l', 'c', 'r'].map(k => <EdgeButton key={k} aria-label={`边框 ${k}`}><Mini kind={k} /></EdgeButton>)}</Side><EdgeButton $off aria-label="反斜线"><Mini kind="d" /></EdgeButton>
            </BorderGrid>
          </Right>
        </Columns>
        <Hint>单击预置选项、预览草图及上面的按钮可以添加边框样式。</Hint>
      </Panel>
      <DialogButtons><PushButton $main>确定</PushButton><PushButton>取消</PushButton></DialogButtons>
    </Dialog>
    <Watermark><Brand><span>Bai</span><Paw><Svg w={54} h={58}><g fill="#ffffffcc" stroke="#c3c3c9"><ellipse cx="8" cy="24" rx="7" ry="9" /><ellipse cx="20" cy="11" rx="7" ry="9" /><ellipse cx="36" cy="12" rx="7" ry="9" /><ellipse cx="46" cy="27" rx="7" ry="9" /><path d="M27 26c8 0 10 10 18 15 9 8 2 16-6 15-9-2-15-1-22 0-11 1-15-9-8-15 8-6 9-15 18-15z" /></g></Svg><b>du</b></Paw><span>经验</span></Brand><Site>jingyan.baidu.com</Site></Watermark>
  </Window>;
}
